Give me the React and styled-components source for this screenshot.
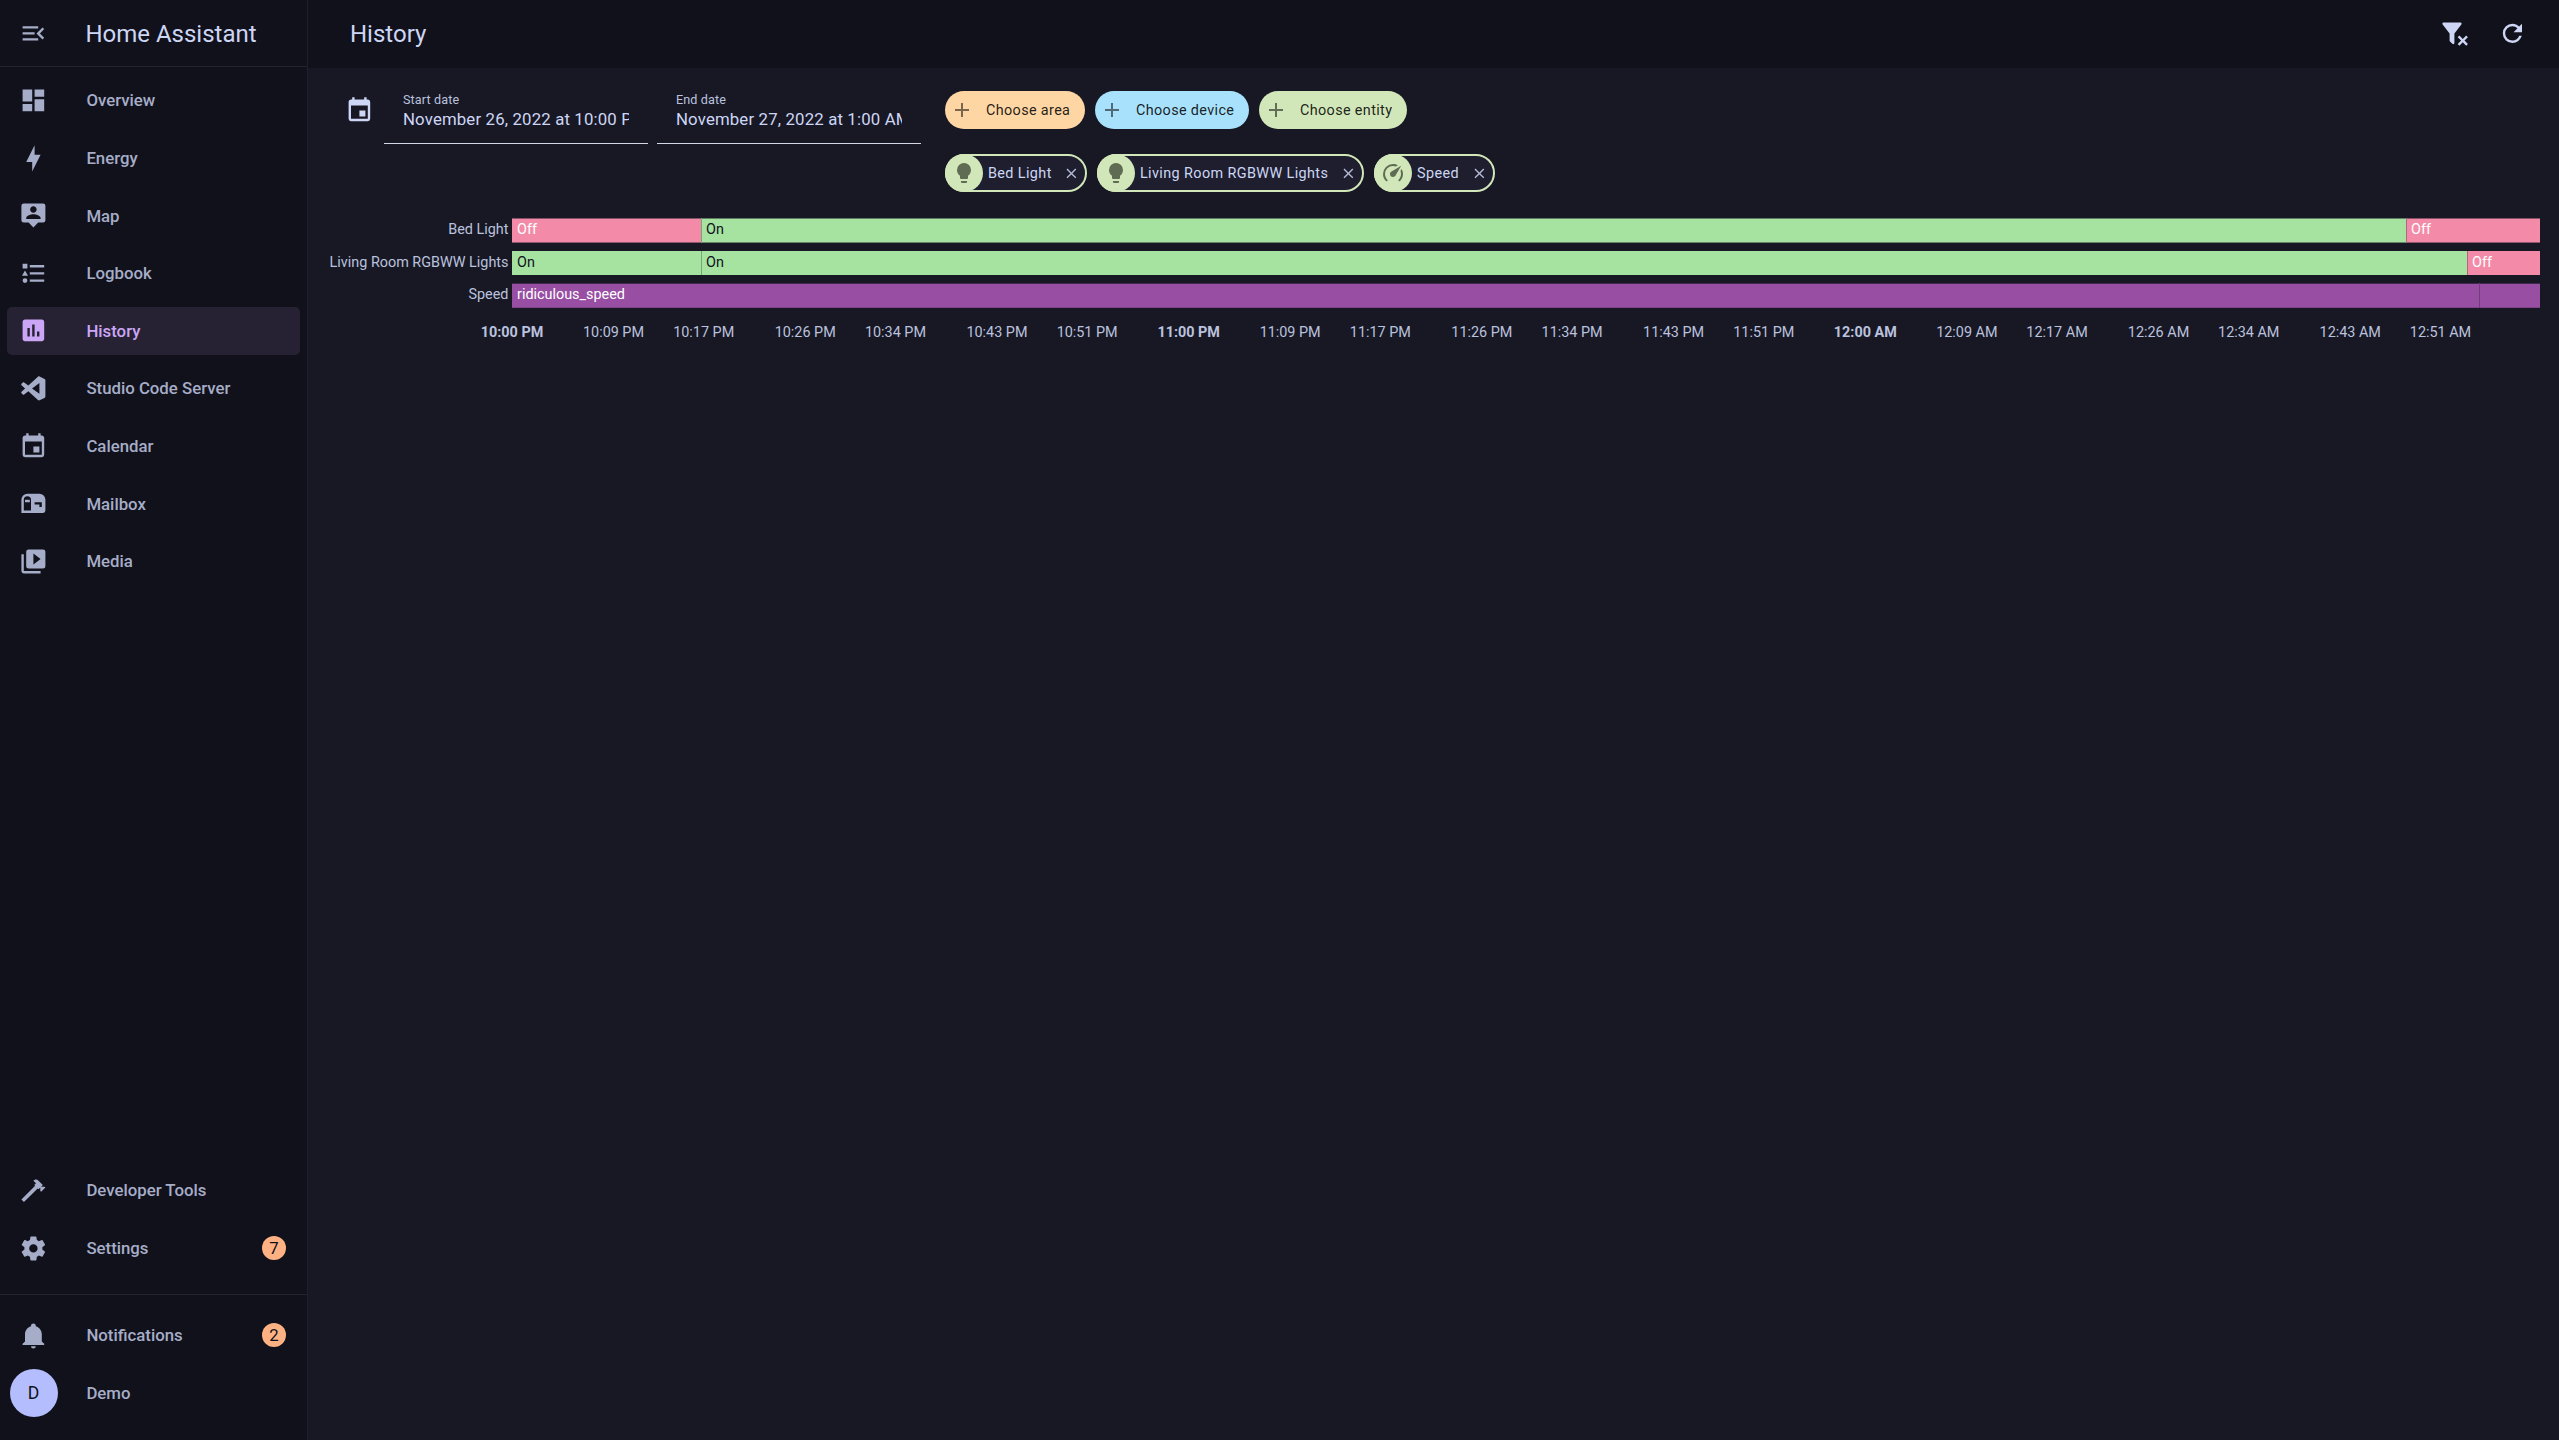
import React from "react";
import styled, { createGlobalStyle, css } from "styled-components";

const Global = createGlobalStyle`
  *, *::before, *::after { box-sizing: border-box; }
  html, body { margin: 0; padding: 0; background: #181825; }
  body { font-family: Roboto, "Liberation Sans", sans-serif; color: #cdd6f4; overflow: hidden; }
`;

const icons = {
  menuOpen: "M21,15.61L19.59,17L14.58,12L19.59,7L21,8.39L17.44,12L21,15.61M3,6H16V8H3V6M3,13V11H13V13H3M3,18V16H16V18H3Z",
  dashboard: "M13,3V9H21V3M13,21H21V11H13M3,21H11V15H3M3,13H11V3H3V13Z",
  bolt: "M11 15H6L13 1V9H18L11 23V15Z",
  map: "M20,2H4A2,2 0 0,0 2,4V16A2,2 0 0,0 4,18H8L12,22L16,18H20A2,2 0 0,0 22,16V4A2,2 0 0,0 20,2M12,4.3C13.5,4.3 14.7,5.5 14.7,7C14.7,8.5 13.5,9.7 12,9.7C10.5,9.7 9.3,8.5 9.3,7C9.3,5.5 10.5,4.3 12,4.3M18,15H6V14.1C6,12.1 10,11 12,11C14,11 18,12.1 18,14.1V15Z",
  logbook: "M5,9.5L7.5,14H2.5L5,9.5M3,4H7V8H3V4M5,20A2,2 0 0,0 7,18A2,2 0 0,0 5,16A2,2 0 0,0 3,18A2,2 0 0,0 5,20M9,5V7H21V5H9M9,19H21V17H9V19M9,13H21V11H9V13Z",
  chartBox: "M9 17H7V10H9V17M13 17H11V7H13V17M17 17H15V13H17V17M19 3H5C3.9 3 3 3.9 3 5V19C3 20.1 3.9 21 5 21H19C20.1 21 21 20.1 21 19V5C21 3.9 20.1 3 19 3Z",
  vscode: "M21.29 4.1L17.15 2.1C16.7 1.87 16.14 1.96 15.8 2.33L7.78 9.65L4.29 7C3.96 6.75 3.51 6.77 3.2 7.05L2.08 8.07C1.71 8.41 1.71 8.99 2.08 9.33L5.1 12L2.08 14.76C1.71 15.1 1.71 15.68 2.08 16.02L3.2 17.04C3.51 17.32 3.96 17.34 4.29 17.09L7.78 14.44L15.8 21.76C16.14 22.1 16.7 22.19 17.15 21.96L21.29 19.96C21.72 19.76 22 19.32 22 18.84V5.22C22 4.74 21.72 4.3 21.29 4.1M17 16.47L10.88 12L17 7.53V16.47Z",
  calendar: "M19,19H5V8H19M16,1V3H8V1H6V3H5C3.89,3 3,3.89 3,5V19A2,2 0 0,0 5,21H19A2,2 0 0,0 21,19V5C21,3.89 20.1,3 19,3H18V1M17,12H12V17H17V12Z",
  mailbox: "M17,4H7A5,5 0 0,0 2,9V20H20A2,2 0 0,0 22,18V9A5,5 0 0,0 17,4M10,18H4V9A3,3 0 0,1 7,6A3,3 0 0,1 10,9V18M19,15H17V13H13V11H19V15M9,11H5V9H9V11Z",
  media: "M4,6H2V20A2,2 0 0,0 4,22H18V20H4V6M20,2H8A2,2 0 0,0 6,4V16A2,2 0 0,0 8,18H20A2,2 0 0,0 22,16V4A2,2 0 0,0 20,2M12,14.5V5.5L18,10L12,14.5Z",
  hammer: "M2 19.63L13.43 8.2L12.72 7.5L14.14 6.07L12 3.89C13.2 2.7 15.09 2.7 16.27 3.89L19.87 7.5L18.45 8.91H21.29L22 9.62L18.45 13.21L17.74 12.5V9.62L16.27 11.04L15.56 10.33L4.13 21.76L2 19.63Z",
  cog: "M12,15.5A3.5,3.5 0 0,1 8.5,12A3.5,3.5 0 0,1 12,8.5A3.5,3.5 0 0,1 15.5,12A3.5,3.5 0 0,1 12,15.5M19.43,12.97C19.47,12.65 19.5,12.33 19.5,12C19.5,11.67 19.47,11.34 19.43,11L21.54,9.37C21.73,9.22 21.78,8.95 21.66,8.73L19.66,5.27C19.54,5.05 19.27,4.96 19.05,5.05L16.56,6.05C16.04,5.66 15.5,5.32 14.87,5.07L14.5,2.42C14.46,2.18 14.25,2 14,2H10C9.75,2 9.54,2.18 9.5,2.42L9.13,5.07C8.5,5.32 7.96,5.66 7.44,6.05L4.95,5.05C4.73,4.96 4.46,5.05 4.34,5.27L2.34,8.73C2.21,8.95 2.27,9.22 2.46,9.37L4.57,11C4.53,11.34 4.5,11.67 4.5,12C4.5,12.33 4.53,12.65 4.57,12.97L2.46,14.63C2.27,14.78 2.21,15.05 2.34,15.27L4.34,18.73C4.46,18.95 4.73,19.03 4.95,18.95L7.44,17.94C7.96,18.34 8.5,18.68 9.13,18.93L9.5,21.58C9.54,21.82 9.75,22 10,22H14C14.25,22 14.46,21.82 14.5,21.58L14.87,18.93C15.5,18.67 16.04,18.34 16.56,17.94L19.05,18.95C19.27,19.03 19.54,18.95 19.66,18.73L21.66,15.27C21.78,15.05 21.73,14.78 21.54,14.63L19.43,12.97Z",
  bell: "M21,19V20H3V19L5,17V11C5,7.9 7.03,5.17 10,4.29C10,4.19 10,4.1 10,4A2,2 0 0,1 12,2A2,2 0 0,1 14,4C14,4.1 14,4.19 14,4.29C16.97,5.17 19,7.9 19,11V17L21,19M14,21A2,2 0 0,1 12,23A2,2 0 0,1 10,21",
  filterRemove: "M14.76,20.83L17.6,18L14.76,15.17L16.17,13.76L19,16.57L21.83,13.76L23.24,15.17L20.43,18L23.24,20.83L21.83,22.24L19,19.4L16.17,22.24L14.76,20.83M12,12V19.88C12.04,20.18 11.94,20.5 11.71,20.71C11.32,21.1 10.69,21.1 10.3,20.71L8.29,18.7C8.06,18.47 7.96,18.16 8,17.87V12H7.97L2.21,4.62C1.87,4.19 1.95,3.56 2.38,3.22C2.57,3.08 2.78,3 3,3V3H17V3C17.22,3 17.43,3.08 17.62,3.22C18.05,3.56 18.13,4.19 17.79,4.62L12.03,12H12Z",
  refresh: "M17.65,6.35C16.2,4.9 14.21,4 12,4A8,8 0 0,0 4,12A8,8 0 0,0 12,20C15.73,20 18.84,17.45 19.73,14H17.65C16.83,16.33 14.61,18 12,18A6,6 0 0,1 6,12A6,6 0 0,1 12,6C13.66,6 15.14,6.69 16.22,7.78L13,11H20V4L17.65,6.35Z",
  plus: "M19,13H13V19H11V13H5V11H11V5H13V11H19V13Z",
  bulb: "M12,2A7,7 0 0,0 5,9C5,11.38 6.19,13.47 8,14.74V17A1,1 0 0,0 9,18H15A1,1 0 0,0 16,17V14.74C17.81,13.47 19,11.38 19,9A7,7 0 0,0 12,2M9,21A1,1 0 0,0 10,22H14A1,1 0 0,0 15,21V20H9V21Z",
  speedometer: "M12,16A3,3 0 0,1 9,13C9,11.88 9.61,10.9 10.5,10.39L20.21,4.77L14.68,14.35C14.18,15.33 13.17,16 12,16M12,3C13.81,3 15.5,3.5 16.97,4.32L14.87,5.53C14,5.19 13,5 12,5A8,8 0 0,0 4,13C4,15.21 4.89,17.21 6.34,18.65H6.35C6.74,19.04 6.74,19.67 6.35,20.06C5.96,20.45 5.32,20.45 4.93,20.07V20.07C3.12,18.26 2,15.76 2,13A10,10 0 0,1 12,3M22,13C22,15.76 20.88,18.26 19.07,20.07V20.07C18.68,20.45 18.05,20.45 17.66,20.06C17.27,19.67 17.27,19.04 17.66,18.65V18.65C19.11,17.2 20,15.21 20,13C20,12 19.81,11 19.46,10.1L20.67,8C21.5,9.5 22,11.18 22,13Z",
  close: "M19,6.41L17.59,5L12,10.59L6.41,5L5,6.41L10.59,12L5,17.59L6.41,19L12,13.41L17.59,19L19,17.59L13.41,12L19,6.41Z",
};

const Svg = styled.svg`
  display: block;
  flex: none;
  width: ${(p) => p.$size}px;
  height: ${(p) => p.$size}px;
  fill: currentColor;
`;
const Icon = ({ name, size = 28.8 }) => (
  <Svg $size={size} viewBox="0 0 24 24">
    <path fillRule="evenodd" d={icons[name]} />
  </Svg>
);

const Page = styled.div`
  display: flex;
  width: 100%;
  height: 100vh;
  background: #181825;
`;

const Sidebar = styled.aside`
  display: flex;
  flex-direction: column;
  flex: none;
  width: 308px;
  height: 100%;
  background: #11111b;
  border-right: 1px solid #1f1f2c;
`;
const SidebarHeader = styled.div`
  display: flex;
  align-items: center;
  height: 67px;
  padding: 0 0 0 18.6px;
  gap: 38px;
  border-bottom: 1px solid #232330;
  color: #a6adc8;
`;
const Brand = styled.span`
  padding-top: 2px;
  font-size: 24px;
  line-height: 30px;
  color: #cdd6f4;
`;
const NavList = styled.nav`
  display: flex;
  flex-direction: column;
  gap: 9.6px;
  padding: ${(p) => p.$pad};
  ${(p) => p.$grow && css`flex: 1;`}
  ${(p) => p.$divided && css`border-top: 1px solid #232330;`}
`;
const NavRow = styled.a`
  display: flex;
  align-items: center;
  height: 48px;
  padding: 0 14px 0 ${(p) => (p.$avatar ? 3 : 12)}px;
  border-radius: 5px;
  color: ${(p) => (p.$active ? "#cba6f7" : "#a6adc8")};
  background: ${(p) => (p.$active ? "#272233" : "transparent")};
`;
const NavIcon = styled.span`
  display: flex;
  flex: none;
  width: ${(p) => (p.$avatar ? 76.4 : 67.4)}px;
`;
const NavText = styled.span`
  flex: 1;
  font-size: 16.8px;
  font-weight: 500;
  line-height: 24px;
`;
const Badge = styled.span`
  width: 24px;
  height: 24px;
  border-radius: 50%;
  background: #feb283;
  color: #11111b;
  font-size: 16.8px;
  line-height: 24px;
  text-align: center;
`;
const Avatar = styled.span`
  width: 48px;
  height: 48px;
  border-radius: 50%;
  background: #b4befe;
  color: #11111b;
  font-size: 17.6px;
  line-height: 49px;
  text-align: center;
  text-indent: -1px;
`;

const Main = styled.main`
  display: flex;
  flex-direction: column;
  flex: 1;
  min-width: 0;
`;
const TopBar = styled.header`
  display: flex;
  align-items: center;
  height: 68px;
  padding: 0 32px 1px 42px;
  background: #11111b;
`;
const Title = styled.h1`
  flex: 1;
  margin: 0;
  padding-top: 1px;
  font-size: 24px;
  font-weight: 400;
  line-height: 30px;
`;
const Actions = styled.div`
  display: flex;
  gap: 29.8px;
`;
const Filters = styled.section`
  display: flex;
  align-items: flex-start;
  height: 150px;
  padding: 8px 0 0 37.4px;
`;
const CalendarButton = styled.div`
  display: flex;
  width: 38.6px;
  padding-top: 20px;
`;
const DateField = styled.div`
  width: 264px;
  height: 68px;
  margin-right: 9px;
  padding: 15px 19px 0;
  border-bottom: 1px solid #d3d6e6;
`;
const FieldLabel = styled.div`
  font-size: 12.6px;
  line-height: 18px;
  color: #bac2de;
  white-space: nowrap;
  letter-spacing: 0.13px;
`;
const FieldValue = styled.div`
  overflow: hidden;
  font-size: 16.8px;
  line-height: 20px;
  letter-spacing: 0.15px;
  white-space: nowrap;
`;
const Pickers = styled.div`
  display: flex;
  flex-direction: column;
  gap: 25px;
  padding: 15px 0 0 15px;
`;
const ChipRow = styled.div`
  display: flex;
  gap: 10px;
`;
const AddChip = styled.button`
  display: flex;
  align-items: center;
  width: ${(p) => p.$w}px;
  height: 38px;
  padding: 0 0 0 5px;
  border: 0;
  border-radius: 19px;
  background: ${(p) => p.$bg};
  color: rgba(0, 0, 0, 0.87);
  font: 400 14.4px/20px Roboto, sans-serif;
  letter-spacing: 0.36px;
  white-space: nowrap;
`;
const AddIcon = styled.span`
  width: 36px;
  opacity: 0.6;
`;
const AddLabel = styled.span`
  padding-top: 1px;
`;
const EntityChip = styled.div`
  display: flex;
  align-items: center;
  width: ${(p) => p.$w}px;
  height: 38px;
  border: 2px solid #d2e7b9;
  border-radius: 19px;
  background: #1e1e2e;
  font-size: 14.4px;
  letter-spacing: 0.39px;
  white-space: nowrap;
`;
const EntityIcon = styled.span`
  display: flex;
  align-items: center;
  justify-content: center;
  flex: none;
  width: 38px;
  height: 38px;
  margin: 0 5px 0 -2px;
  border-radius: 50%;
  background: #d2e7b9;
  color: #5f6b53;
`;
const EntityName = styled.span`
  flex: 1;
  padding-top: 1px;
  line-height: 20px;
`;
const RemoveButton = styled.span`
  margin-right: 5.6px;
  color: #b3bad6;
`;

const Chart = styled.section`
  display: flex;
  flex-direction: column;
  padding-right: 19px;
`;
const TimelineRow = styled.div`
  display: flex;
  height: ${(p) => p.$h}px;
  margin-bottom: 8px;
`;
const RowLabel = styled.div`
  width: 204px;
  padding-right: 3.5px;
  font-size: 14.4px;
  line-height: 24px;
  text-align: right;
  color: #bac2de;
  white-space: nowrap;
`;
const Track = styled.div`
  display: flex;
  flex: 1;
`;
const tones = {
  off: ["#f38ba8", "#ffffff"],
  on: ["#a6e3a1", "#11111b"],
  speed: ["#984ea3", "#ffffff"],
};
const Segment = styled.div`
  flex: none;
  width: ${(p) => (p.$span / 2028) * 100}%;
  padding-left: 5px;
  background: ${(p) => tones[p.$tone][0]};
  color: ${(p) => tones[p.$tone][1]};
  font-size: 14.4px;
  line-height: 24px;
  white-space: nowrap;
  box-shadow: ${(p) => p.$edge};
  & + & {
    padding-left: 4px;
    border-left: 1px solid rgba(24, 24, 37, 0.3);
  }
`;
const Axis = styled.div`
  display: flex;
  height: 20px;
  margin: 7px -2px 0 204px;
`;
const Tick = styled.div`
  flex: ${(p) => p.$span} 1 0;
  width: 0;
  min-width: 0;
  font-size: 14.4px;
  line-height: 20px;
  color: #bac2de;
  font-weight: ${(p) => (p.$major ? 700 : 400)};
  white-space: nowrap;
  span { display: inline-block; transform: translateX(-50%); }
`;

const navItems = [
  ["dashboard", "Overview"],
  ["bolt", "Energy"],
  ["map", "Map"],
  ["logbook", "Logbook"],
  ["chartBox", "History"],
  ["vscode", "Studio Code Server"],
  ["calendar", "Calendar"],
  ["mailbox", "Mailbox"],
  ["media", "Media"],
];

const softEdges = "inset 0 1px rgba(24,24,37,.5), inset 0 -1px rgba(24,24,37,.45)";
const timeline = [
  { label: "Bed Light", h: 25, edge: softEdges, parts: [["off", 189, "Off"], ["on", 1705, "On"], ["off", 134, "Off"]] },
  { label: "Living Room RGBWW Lights", h: 24, edge: "none", parts: [["on", 189, "On"], ["on", 1766, "On"], ["off", 73, "Off"]] },
  { label: "Speed", h: 25, edge: "inset 0 1px rgba(24,24,37,.7), inset 0 -1px rgba(24,24,37,.2)", parts: [["speed", 1967, "ridiculous_speed"], ["speed", 61, ""]] },
];

const minutes = [0, 9, 17, 26, 34, 43, 51, 60, 69, 77, 86, 94, 103, 111, 120, 129, 137, 146, 154, 163, 171];
const clock = (m) => {
  const hour = [10, 11, 12][Math.floor(m / 60)];
  return `${hour}:${String(m % 60).padStart(2, "0")} ${m < 120 ? "PM" : "AM"}`;
};

const NavItem = ({ icon, label, active, badge, avatar }) => (
  <NavRow $active={active} $avatar={!!avatar}>
    <NavIcon $avatar={!!avatar}>{avatar ? <Avatar>{avatar}</Avatar> : <Icon name={icon} />}</NavIcon>
    <NavText>{label}</NavText>
    {badge && <Badge>{badge}</Badge>}
  </NavRow>
);

export default function App() {
  return (
    <Page>
      <Global />
      <Sidebar>
        <SidebarHeader>
          <Icon name="menuOpen" />
          <Brand>Home Assistant</Brand>
        </SidebarHeader>
        <NavList $grow $pad="9.4px 7px 0">
          {navItems.map(([icon, label]) => (
            <NavItem key={label} icon={icon} label={label} active={label === "History"} />
          ))}
        </NavList>
        <NavList $pad="0 7px 22.4px">
          <NavItem icon="hammer" label="Developer Tools" />
          <NavItem icon="cog" label="Settings" badge="7" />
        </NavList>
        <NavList $divided $pad="16px 7px 23px">
          <NavItem icon="bell" label="Notifications" badge="2" />
          <NavItem avatar="D" label="Demo" />
        </NavList>
      </Sidebar>
      <Main>
        <TopBar>
          <Title>History</Title>
          <Actions>
            <Icon name="filterRemove" />
            <Icon name="refresh" />
          </Actions>
        </TopBar>
        <Filters>
          <CalendarButton><Icon name="calendar" /></CalendarButton>
          <DateField>
            <FieldLabel>Start date</FieldLabel>
            <FieldValue>November 26, 2022 at 10:00 PM</FieldValue>
          </DateField>
          <DateField>
            <FieldLabel>End date</FieldLabel>
            <FieldValue>November 27, 2022 at 1:00 AM</FieldValue>
          </DateField>
          <Pickers>
            <ChipRow>
              {[["Choose area", 140, "#fed6a4"], ["Choose device", 154, "#a8e1fb"], ["Choose entity", 148, "#d2e7b9"]].map(([text, w, bg]) => (
                <AddChip key={text} $w={w} $bg={bg}>
                  <AddIcon><Icon name="plus" size={24} /></AddIcon>
                  <AddLabel>{text}</AddLabel>
                </AddChip>
              ))}
            </ChipRow>
            <ChipRow>
              {[["bulb", "Bed Light", 142], ["bulb", "Living Room RGBWW Lights", 267], ["speedometer", "Speed", 121]].map(([icon, name, w]) => (
                <EntityChip key={name} $w={w}>
                  <EntityIcon><Icon name={icon} size={24} /></EntityIcon>
                  <EntityName>{name}</EntityName>
                  <RemoveButton><Icon name="close" size={16.8} /></RemoveButton>
                </EntityChip>
              ))}
            </ChipRow>
          </Pickers>
        </Filters>
        <Chart>
          {timeline.map((row) => (
            <TimelineRow key={row.label} $h={row.h}>
              <RowLabel>{row.label}</RowLabel>
              <Track>
                {row.parts.map(([tone, span, text], i) => (
                  <Segment key={i} $tone={tone} $span={span} $edge={row.edge}>{text}</Segment>
                ))}
              </Track>
            </TimelineRow>
          ))}
          <Axis>
            {minutes.map((m, i) => (
              <Tick key={m} $span={(minutes[i + 1] ?? 180) - m} $major={m % 60 === 0}>
                <span>{clock(m)}</span>
              </Tick>
            ))}
          </Axis>
        </Chart>
      </Main>
    </Page>
  );
}
